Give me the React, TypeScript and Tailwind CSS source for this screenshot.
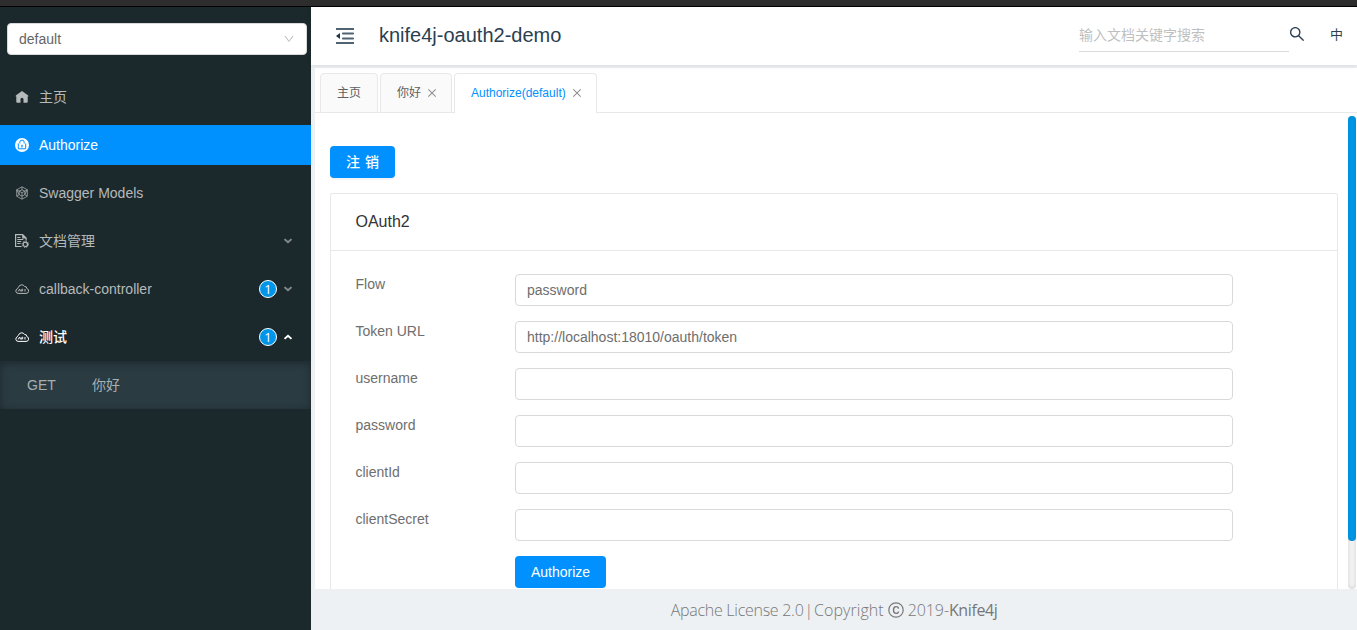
import type { ReactNode } from 'react';
import { AiOutlineClose, AiOutlineDown, AiOutlineSearch } from 'react-icons/ai';

function HomeIcon() {
  return (
    <svg width="14" height="14" viewBox="0 0 14 14" fill="currentColor">
      <path d="M7 .9 12.900 5.200c.7.600.5 1.400-.2 1.400v5.200c0 .6-.3 1-.9 1H8.500V9.200a1.500 1.500 0 0 0-3 0v3.600H2.200c-.6 0-.9-.4-.9-1V6.600c-.7 0-.9-.8-.2-1.400z" />
    </svg>
  );
}

function FoldIcon() {
  return (
    <svg width="18" height="16" viewBox="0 0 18 16" fill="#4f6373">
      <rect width="18" height="2" />
      <rect y="14" width="18" height="2" />
      <rect x="6" y="4.5" width="12" height="2" rx="0.8" />
      <rect x="6" y="9.5" width="12" height="2" rx="0.8" />
      <path d="M0 8 4 5v6z" fill="#1f3446" />
    </svg>
  );
}

function LockIcon() {
  return (
    <svg width="14" height="14" viewBox="0 0 14 14" fill="none">
      <circle cx="7" cy="7" r="7" fill="currentColor" />
      <path d="M4.800 5.500V4.300a2.200 2.200 0 0 1 4.400 0v1.200" stroke="#0091ff" strokeWidth="1" />
      <path d="M3.300 5.500v5.300h7.400V5.500" stroke="#0091ff" strokeWidth="1" />
      <path d="M7 6.800v2.800" stroke="#0091ff" strokeWidth="1.3" />
    </svg>
  );
}

function ModelIcon() {
  return (
    <svg width="14" height="14" viewBox="0 0 14 14" fill="none" stroke="currentColor" strokeWidth="0.7">
      <path d="M7 .8 12.3 3.8v6.4L7 13.2 1.7 10.2V3.8zM7 .8v3M1.7 3.8l2.5 1.3L7 3.8l2.8 1.3 2.5-1.3M4.2 5.1v3.5L7 10.2l2.8-1.6V5.1L7 6.7 4.2 5.1M7 6.7v6.5M1.7 10.2l2.5-1.6M12.3 10.2 9.8 8.6M1.7 3.8 4.2 8.6M12.3 3.8 9.8 8.6" />
    </svg>
  );
}

function DocIcon() {
  return (
    <svg width="14" height="14" viewBox="0 0 14 14" fill="none" stroke="currentColor">
      <path d="M6.500 12.500H.6V.6h7l3.500 3.500v2.500" strokeWidth="1.2" />
      <path d="M7.2.4v4h4z" fill="currentColor" stroke="none" />
      <path d="M2.300 3.500h3.200M2.300 5.500h6M2.300 7.500h4M2.300 9.500h3.200" strokeWidth="1" />
      <circle cx="10.3" cy="10.3" r="2.2" strokeWidth="1.2" />
      <circle cx="10.3" cy="10.3" r="3.2" strokeWidth="1" strokeDasharray="1.25 1.25" />
    </svg>
  );
}

function CloudIcon() {
  return (
    <svg width="14" height="14" viewBox="0 0 14 14" fill="none" stroke="currentColor">
      <path d="M3.1 11.400h7.900a2.500 2.500 0 0 0 .8-4.900 2 2 0 0 0-2.200-2 3.300 3.300 0 0 0-6.100.8 2 2 0 0 0-1.200 1.500 2.400 2.400 0 0 0 .8 4.600z" strokeWidth="1" />
      <path d="M3.300 9.400 4.600 7l1.100 2.400M6.800 9.600V7.300h.8a.7.7 0 0 1 0 1.300h-.8M10 7v2.500" strokeWidth="1" />
    </svg>
  );
}

function CopyrightIcon() {
  return (
    <svg width="16" height="16" viewBox="0 0 16 16" fill="none" stroke="currentColor" strokeWidth="1.2">
      <circle cx="8" cy="8" r="7.2" />
      <path d="M10.500 6.600c-.1-1.200-.9-2-2.400-2-1.700 0-2.600 1.200-2.600 3.400s.9 3.400 2.600 3.400c1.500 0 2.300-.8 2.400-1.900" strokeWidth="1.4" />
    </svg>
  );
}

function Chevron({ up = false }: { up?: boolean }) {
  return (
    <svg width="10" height="6" viewBox="0 0 10 6" fill="none" stroke="currentColor" strokeWidth="1.9">
      <path d={up ? 'M1.5 4.9 5 1.700l3.500 3.200' : 'M1.5 1.1 5 4.300l3.500-3.200'} />
    </svg>
  );
}

type ItemProps = { icon: ReactNode; label: string; active?: boolean; open?: boolean; badge?: string; expandable?: boolean };

function MenuItem({ icon, label, active, open, badge, expandable }: ItemProps) {
  return (
    <li
      className={`flex h-10 items-center pl-[15px] pr-[18px] ${
        active ? 'bg-[#0091ff] text-white' : open ? 'font-medium text-white' : 'text-[#b6babb]'
      }`}
    >
      <span className="mr-[10px] flex w-[14px] justify-center">{icon}</span>
      <span className="flex-1">{label}</span>
      {badge && (
        <span className="mr-[6px] flex size-[18px] items-center justify-center rounded-full border border-white bg-[#0095e8] font-['Open_Sans',sans-serif] text-[13px] font-normal leading-none text-white">
          {badge}
        </span>
      )}
      {expandable && (
        <span className={open ? 'text-white' : 'text-[#858b8d]'}>
          <Chevron up={open} />
        </span>
      )}
    </li>
  );
}

const fields = [
  { label: 'Flow', value: 'password' },
  { label: 'Token URL', value: 'http://localhost:18010/oauth/token' },
  { label: 'username', value: '' },
  { label: 'password', value: '' },
  { label: 'clientId', value: '' },
  { label: 'clientSecret', value: '' },
];

function Sidebar() {
  return (
    <aside className="w-[311px] shrink-0 bg-[#1c292c] pt-4">
      <div className="ml-[7px] flex h-8 w-[300px] items-center justify-between rounded border border-[#d9d9d9] bg-white pl-[11px] pr-[11px] text-[#656565]">
        <span>default</span>
        <AiOutlineDown size={12} color="#bfbfbf" />
      </div>
      <ul className="mt-[22px] flex flex-col gap-2">
        <MenuItem icon={<HomeIcon />} label="主页" />
        <MenuItem icon={<LockIcon />} label="Authorize" active />
        <MenuItem icon={<ModelIcon />} label="Swagger Models" />
        <MenuItem icon={<DocIcon />} label="文档管理" expandable />
        <MenuItem icon={<CloudIcon />} label="callback-controller" badge="1" expandable />
        <MenuItem icon={<CloudIcon />} label="测试" badge="1" open expandable />
      </ul>
      <div className="mt-1 flex h-12 items-center bg-[#2a3b42] pl-[27px] text-[#a6b0b3] shadow-[inset_0_2px_8px_rgba(0,0,0,0.32)]">
        <span className="w-[65px]">GET</span>
        <span>你好</span>
      </div>
    </aside>
  );
}

function Header() {
  return (
    <header className="z-10 flex h-[58px] shrink-0 items-center bg-white pl-[25px] pr-[14px] text-[#2a3f50] shadow-[0_1px_4px_rgba(0,21,41,0.1)]">
      <FoldIcon />
      <h1 className="ml-[25px] flex-1 pb-[2px] text-xl leading-6">knife4j-oauth2-demo</h1>
      <div className="flex h-8 w-[210px] items-center border-b border-[#d9d9d9] pb-[2px] text-[#bfbfbf]">输入文档关键字搜索</div>
      <AiOutlineSearch size={18} className="-ml-px mb-1 mr-[24px]" />
      <span className="pb-[2px] text-[13px]">中</span>
    </header>
  );
}

function Tabs() {
  return (
    <div className="flex h-[45px] items-end gap-[2px] pl-[5px] text-xs text-[#606060] shadow-[inset_0_-1px_0_#e8e8e8]">
      <div className="flex h-10 w-[58px] items-center justify-center rounded-t border border-[#e8e8e8] bg-[#fafafa]">主页</div>
      <div className="flex h-10 w-[72px] items-center gap-[5px] rounded-t border border-[#e8e8e8] bg-[#fafafa] pl-4">
        <span>你好</span>
        <AiOutlineClose size={12} color="#8c8c8c" />
      </div>
      <div className="flex h-10 w-[143px] items-center gap-[5px] rounded-t border border-b-0 border-[#e8e8e8] bg-white pb-px pl-4 text-[#0091ff]">
        <span>Authorize(default)</span>
        <AiOutlineClose size={12} color="#8c8c8c" />
      </div>
    </div>
  );
}

export default function App() {
  return (
    <div className="flex h-[630px] w-[1357px] flex-col overflow-hidden bg-white font-['Liberation_Sans','Noto_Sans_CJK_SC',sans-serif] text-sm">
      <div className="h-[7px] shrink-0 border-b border-black bg-[#2d2d2d]" />
      <div className="flex min-h-0 flex-1">
        <Sidebar />
        <div className="flex min-w-0 flex-1 flex-col bg-[#edf1f4]">
          <Header />
          <main className="ml-1 mt-[3px] flex min-h-0 flex-1 flex-col bg-white">
            <Tabs />
            <div className="flex min-h-0 flex-1 overflow-hidden">
              <div className="min-w-0 flex-1 pl-[15px] pr-[10px] pt-[33px]">
                <button className="flex h-8 w-[65px] items-center justify-center gap-[5px] rounded bg-[#0091ff] font-medium text-white shadow-[0_2px_0_rgba(0,0,0,0.045)]">
                  <span>注</span>
                  <span>销</span>
                </button>
                <section className="mt-[15px] h-[450px] rounded-[2px] border border-[#e8e8e8]">
                  <h2 className="flex h-[57px] items-center border-b border-[#e8e8e8] pl-[24.5px] text-base text-[#333]">OAuth2</h2>
                  <div className="flex flex-col gap-[15px] pl-6 pt-[23px] text-[#6e6e6e]">
                    {fields.map((f) => (
                      <div key={f.label} className="flex h-8">
                        <span className="w-40 pl-[0.5px] leading-5">{f.label}</span>
                        <div className="flex w-[718px] items-center rounded border border-[#d9d9d9] px-[11px]">{f.value}</div>
                      </div>
                    ))}
                    <button className="ml-40 h-8 w-[91px] rounded bg-[#0091ff] text-white">Authorize</button>
                  </div>
                </section>
              </div>
              <div className="mr-px mt-[3px] w-2 rounded-full bg-[#f5f5f5] shadow-[inset_0_0_5px_rgba(0,0,0,0.15)]">
                <div className="h-[425px] rounded-full bg-[#0099e8] shadow-[inset_0_0_4px_rgba(0,0,0,0.15)]" />
              </div>
            </div>
          </main>
          <footer className="flex h-[41px] shrink-0 items-center justify-center pt-px font-['Open_Sans',sans-serif] text-base font-light tracking-[-0.27px] text-[#777]">
            <span>Apache License 2.0</span>
            <span className="mx-[1px]">|</span>
            <span className="mr-1 tracking-[0.08px]">Copyright</span>
            <CopyrightIcon />
            <span className="ml-1 tracking-[-0.1px]">2019-</span>
            <span className="font-normal tracking-[-0.4px]">Knife4j</span>
          </footer>
        </div>
      </div>
    </div>
  );
}
